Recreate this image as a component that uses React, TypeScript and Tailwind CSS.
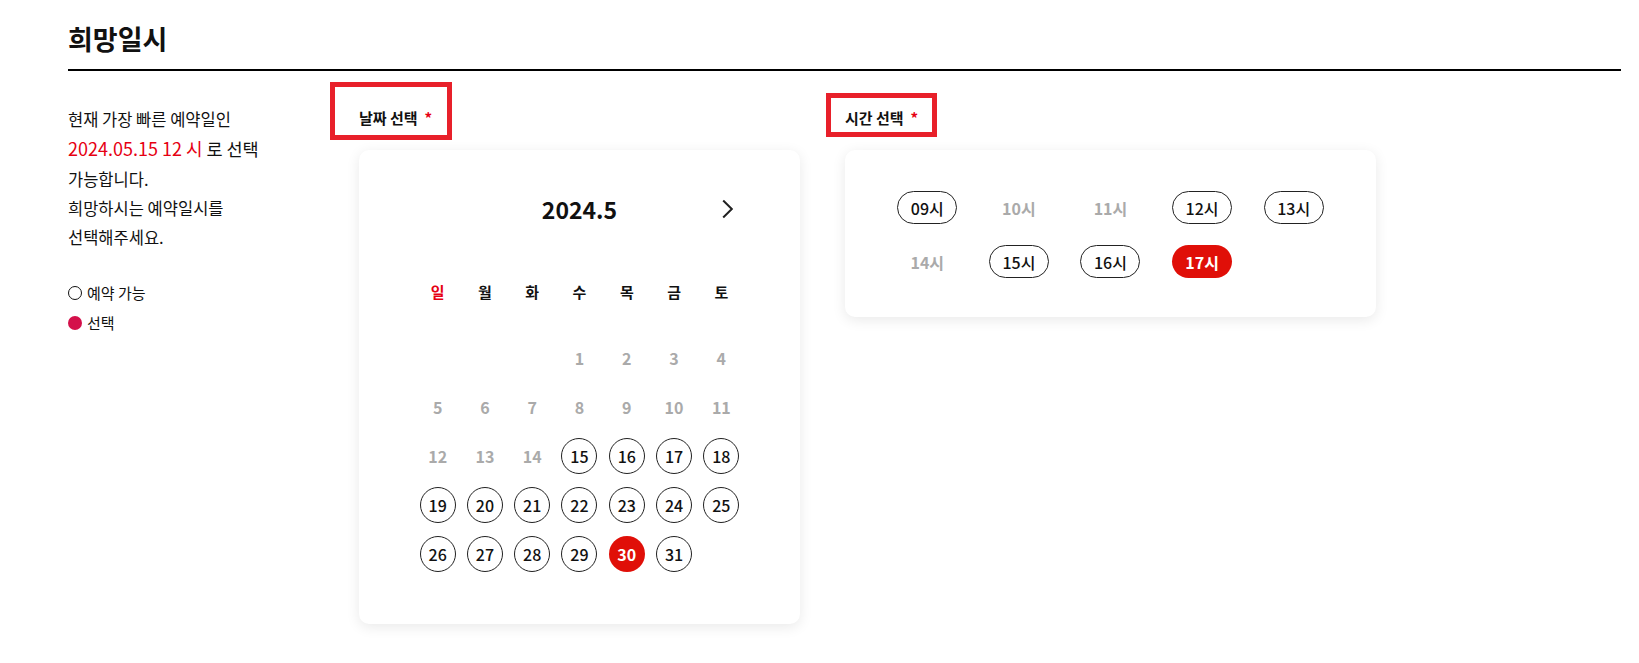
const WEEKDAYS = ['일', '월', '화', '수', '목', '금', '토'];
const FIRST_AVAILABLE = 15;
const SELECTED_DAY = 30;

type Slot = { label: string; state: 'open' | 'closed' | 'selected' };

const SLOTS: Slot[] = [
  { label: '09시', state: 'open' },
  { label: '10시', state: 'closed' },
  { label: '11시', state: 'closed' },
  { label: '12시', state: 'open' },
  { label: '13시', state: 'open' },
  { label: '14시', state: 'closed' },
  { label: '15시', state: 'open' },
  { label: '16시', state: 'open' },
  { label: '17시', state: 'selected' },
];

function SectionLabel({ text, box }: { text: string; box: string }) {
  return (
    <div className="relative h-[20px] text-[15px] font-bold leading-[20px] text-[#111]">
      <span className={`pointer-events-none absolute border-[5px] border-[#e8202a] ${box}`} />
      {text}
      <span className="ml-[7px] text-[#e60012]">*</span>
    </div>
  );
}

function DayCell({ day }: { day: number | null }) {
  if (day === null) return <div className="h-[49px]" />;

  let cls = 'text-[#aaa] font-semibold';
  if (day === SELECTED_DAY) cls = 'bg-[#e00f08] text-white font-bold';
  else if (day >= FIRST_AVAILABLE) cls = 'border border-[#222] text-[#111] font-medium';

  return (
    <div className="flex h-[49px] items-center justify-center">
      <span className={`flex h-[36px] w-[36px] items-center justify-center rounded-full text-[16px] ${cls}`}>
        {day}
      </span>
    </div>
  );
}

function Calendar() {
  // May 2024 starts on a Wednesday
  const cells: (number | null)[] = [null, null, null];
  for (let d = 1; d <= 31; d++) cells.push(d);

  return (
    <div className="w-[441px] rounded-[10px] bg-white pt-[45px] pb-[46px] shadow-[0_3px_14px_rgba(0,0,0,0.09)]">
      <div className="relative flex h-[28px] items-center justify-center">
        <span className="text-[23px] font-bold leading-[28px] text-[#111]">2024.5</span>
        <svg
          className="absolute right-[67px] top-1/2 -translate-y-1/2"
          width="11"
          height="19"
          viewBox="0 0 11 19"
          fill="none"
        >
          <path d="M1.2 1 L9.8 9.5 L1.2 18" stroke="#222" strokeWidth="2" />
        </svg>
      </div>

      <div className="mx-auto mt-[59px] grid w-[331px] grid-cols-7">
        {WEEKDAYS.map((w, i) => (
          <div
            key={w}
            className={`text-center text-[15px] font-bold leading-[20px] ${i === 0 ? 'text-[#e60012]' : 'text-[#111]'}`}
          >
            {w}
          </div>
        ))}
      </div>

      <div className="mx-auto mt-[31px] grid w-[331px] grid-cols-7">
        {cells.map((d, i) => (
          <DayCell key={i} day={d} />
        ))}
      </div>
    </div>
  );
}

function TimePicker() {
  return (
    <div className="w-[531px] rounded-[10px] bg-white pt-[41px] pb-[39px] shadow-[0_3px_14px_rgba(0,0,0,0.09)]">
      <div className="mx-auto grid w-[458px] grid-cols-5 gap-y-[21px]">
        {SLOTS.map((s) => (
          <div key={s.label} className="flex justify-center">
            <span
              className={`flex h-[33px] w-[60px] items-center justify-center rounded-full text-[16px] ${
                s.state === 'selected'
                  ? 'bg-[#e00f08] font-bold text-white'
                  : s.state === 'open'
                    ? 'border border-[#222] font-medium text-[#111]'
                    : 'font-semibold text-[#aaa]'
              }`}
            >
              {s.label}
            </span>
          </div>
        ))}
      </div>
    </div>
  );
}

export default function App() {
  return (
    <div className="min-h-screen bg-white font-['Noto_Sans_CJK_KR',sans-serif] text-[#111]">
      <div className="ml-[68px] mr-[18px] pt-[25px]">
        <h1 className="text-[27px] font-bold leading-[28px]">희망일시</h1>
        <div className="mt-[16px] h-[2px] bg-black" />

        <div className="flex">
          <aside className="w-[291px] shrink-0 pt-[34px]">
            <p className="text-[16.5px] leading-[29.25px]">
              현재 가장 빠른 예약일인
              <br />
              <span className="text-[18px] text-[#e60012]">2024.05.15 12 시</span>
              <span className="text-[17.5px]"> 로 선택</span>
              <br />
              가능합니다.
              <br />
              희망하시는 예약일시를
              <br />
              선택해주세요.
            </p>

            <ul className="mt-[26px] text-[15px]">
              <li className="flex h-[30px] items-center gap-[5px]">
                <span className="h-[14px] w-[14px] rounded-full border-[1.5px] border-[#111]" />
                예약 가능
              </li>
              <li className="flex h-[30px] items-center gap-[5px]">
                <span className="h-[14px] w-[14px] rounded-full bg-[#d4104a]" />
                선택
              </li>
            </ul>
          </aside>

          <section className="pt-[37px]">
            <SectionLabel text="날짜 선택" box="-left-[29px] -top-[26px] h-[58px] w-[122px]" />
            <div className="mt-[22px]">
              <Calendar />
            </div>
          </section>

          <section className="ml-[45px] pt-[37px]">
            <SectionLabel text="시간 선택" box="-left-[19px] -top-[15px] h-[44px] w-[111px]" />
            <div className="mt-[22px]">
              <TimePicker />
            </div>
          </section>
        </div>
      </div>
    </div>
  );
}
